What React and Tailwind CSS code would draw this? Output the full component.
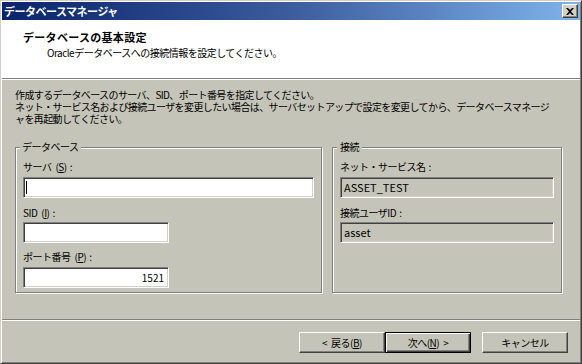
import React from 'react';

const sunken = 'border border-t-[#808080] border-l-[#808080] border-r-white border-b-white shadow-[inset_1px_1px_0_#404040,inset_-1px_-1px_0_#d4d0c8]';
const etched = 'relative border border-[#808080] shadow-[inset_1px_1px_0_#fff,1px_1px_0_#fff]';

const Btn = ({ children, focused }) => (
  <button
    className={
      focused
        ? 'w-[86px] h-[21px] flex items-center justify-center border border-black shadow-[inset_1px_1px_0_#fff,inset_-1px_-1px_0_#404040,inset_-2px_-2px_0_#808080] bg-[#c5c4b8] text-black leading-none'
        : 'w-[86px] h-[21px] flex items-center justify-center border border-t-white border-l-white border-r-[#404040] border-b-[#404040] shadow-[inset_-1px_-1px_0_#808080] bg-[#c5c4b8] text-black leading-none'
    }
  >
    {children}
  </button>
);

const Label = ({ children, className = '' }) => (
  <div className={`h-[14px] leading-[14px] ${className}`}>{children}</div>
);

const App = () => {
  return (
    <div className="w-[582px] h-[364px] flex flex-col bg-[#c5c4b8] border border-t-[#d4d0c8] border-l-[#d4d0c8] border-r-[#404040] border-b-[#404040] shadow-[inset_1px_1px_0_#fff,inset_-1px_-1px_0_#808080] p-px font-['Noto_Sans_CJK_JP',sans-serif] text-[10px] tracking-[-0.5px] text-black overflow-hidden">
      {/* タイトルバー */}
      <div className="h-[18px] flex items-center justify-between pl-[2px] pr-[2px] bg-linear-to-r from-[#0a246a] via-[#3c5c9e] to-[#80b4ea]">
        <span className="text-white font-bold text-[11px] tracking-[-0.5px] leading-none">データベースマネージャ</span>
        <div className="w-[16px] h-[14px] flex items-center justify-center bg-[#d4d0c8] border border-t-white border-l-white border-r-[#404040] border-b-[#404040] shadow-[inset_-1px_-1px_0_#808080]">
          <svg width="8" height="7" viewBox="0 0 8 7">
            <path d="M0 0h2l2 2 2-2h2L5 3.5 8 7H6L4 5 2 7H0l3-3.5z" fill="#000" />
          </svg>
        </div>
      </div>

      {/* ヘッダー */}
      <div className="h-[58px] bg-white pt-[10px]">
        <div className="pl-[21px] h-[14px] leading-[14px] font-bold text-[11px] tracking-[0.3px]">データベースの基本設定</div>
        <div className="pl-[45px] mt-[2px] h-[14px] leading-[14px]">Oracleデータベースへの接続情報を設定してください。</div>
      </div>
      <div className="h-[2px] border-t border-t-[#808080] border-b border-b-white" />

      {/* 本体 */}
      <div className="h-[239px] px-[13px] pt-[9px]">
        <div className="leading-[12px] tracking-[-0.6px] whitespace-nowrap">
          <div className="h-[12px]">作成するデータベースのサーバ、SID、ポート番号を指定してください。</div>
          <div className="h-[12px]">ネット・サービス名および接続ユーザを変更したい場合は、サーバセットアップで設定を変更してから、データベースマネージ</div>
          <div className="h-[12px]">ャを再起動してください。</div>
        </div>

        <div className="flex gap-[10px] mt-[22px]">
          <div className={`${etched} w-[307px] h-[146px] pl-[7px] pt-[12px]`}>
            <span className="absolute left-[4px] top-[-8px] px-[2px] bg-[#c5c4b8] leading-[14px]">データベース</span>
            <Label>サーバ<span className="ml-[4px]">(<u>S</u>)</span><span className="ml-[3px]">:</span></Label>
            <div className={`${sunken} mt-[3px] w-[291px] h-[21px] bg-white flex items-center pl-[2px]`}>
              <div className="w-px h-[13px] bg-black" />
            </div>
            <Label className="mt-[8px]">SID<span className="ml-[4px]">(<u>I</u>)</span><span className="ml-[3px]">:</span></Label>
            <div className={`${sunken} mt-[2px] w-[146px] h-[21px] bg-white`} />
            <Label className="mt-[7px]">ポート番号<span className="ml-[4px]">(<u>P</u>)</span><span className="ml-[3px]">:</span></Label>
            <div className={`${sunken} mt-[3px] w-[146px] h-[21px] bg-white flex items-center justify-end pr-[4px] tracking-normal`}>1521</div>
          </div>

          <div className={`${etched} w-[230px] h-[146px] pl-[7px] pt-[12px]`}>
            <span className="absolute left-[4px] top-[-8px] px-[3px] bg-[#c5c4b8] leading-[14px]">接続</span>
            <Label>ネット・サービス名<span className="ml-[3px]">:</span></Label>
            <div className={`${sunken} mt-[3px] w-[214px] h-[21px] bg-[#c5c4b8] flex items-center pl-[3px] text-[11px] tracking-normal`}>ASSET_TEST</div>
            <Label className="mt-[8px]">接続ユーザID<span className="ml-[3px]">:</span></Label>
            <div className={`${sunken} mt-[2px] w-[214px] h-[21px] bg-[#c5c4b8] flex items-center pl-[3px] text-[11px] tracking-normal`}>asset</div>
          </div>
        </div>
      </div>

      <div className="h-[2px] border-t border-t-[#808080] border-b border-b-white" />

      {/* ボタン */}
      <div className="h-[41px] flex justify-end items-start pt-[11px] pr-[12px]">
        <Btn>&lt;<span className="ml-[4px]">戻る(<u>B</u>)</span></Btn>
        <Btn focused>次へ(<u>N</u>)<span className="ml-[4px]">&gt;</span></Btn>
        <div className="w-[11px]" />
        <Btn>キャンセル</Btn>
      </div>
    </div>
  );
};

export default App;
